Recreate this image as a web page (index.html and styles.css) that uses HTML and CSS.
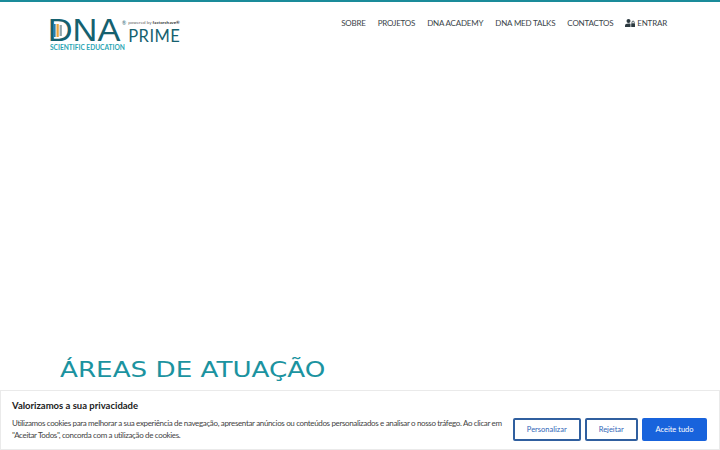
FILE: index.html
```html
<!DOCTYPE html>
<html lang="pt">
<head>
    <meta charset="UTF-8">
    <title>DNA Prime</title>
    <link rel="stylesheet" href="styles.css">
</head>
<body>
    <header class="site-header">
        <a class="logo" href="#">
            <div class="logo-top">
                <span class="logo-dna">DNA
                    <svg class="logo-bars" width="8" height="13" viewBox="0 0 8 13">
                        <rect x="0" y="0" width="2" height="13" fill="#2a7fa8"/>
                        <rect x="2.8" y="0" width="2" height="13" fill="#e8a33d"/>
                        <rect x="5.6" y="1" width="2" height="11" fill="#8fa6ad"/>
                    </svg>
                </span>
                <span class="logo-reg">®</span>
                <div class="logo-right">
                    <span class="logo-small">powered by <b>factorchave®</b></span>
                    <span class="logo-prime">PRIME</span>
                </div>
            </div>
            <span class="logo-sub">SCIENTIFIC EDUCATION</span>
        </a>
        <nav class="main-nav">
            <a href="#">SOBRE</a>
            <a href="#">PROJETOS</a>
            <a href="#">DNA ACADEMY</a>
            <a href="#">DNA MED TALKS</a>
            <a href="#">CONTACTOS</a>
            <a href="#" class="login">
                <svg width="10" height="8" viewBox="0 0 10 8"><circle cx="3.5" cy="2" r="2" fill="#2d3a40"/><path d="M0 8V6.6C0 5.2 1.2 4.5 3.5 4.5c.8 0 1.5.1 2 .3V8Z" fill="#2d3a40"/><rect x="6.2" y="4.2" width="3.8" height="3.8" rx=".5" fill="#2d3a40"/><path d="M7 4.2V3.2a1.1 1.1 0 0 1 2.2 0v1" fill="none" stroke="#2d3a40" stroke-width=".8"/></svg>
                ENTRAR
            </a>
        </nav>
    </header>

    <main class="content">
        <h2 class="section-title">ÁREAS DE ATUAÇÃO</h2>
    </main>

    <div class="cookie-bar">
        <div class="cookie-text">
            <p class="cookie-title">Valorizamos a sua privacidade</p>
            <p class="cookie-desc">Utilizamos cookies para melhorar a sua experiência de navegação, apresentar anúncios ou conteúdos personalizados e analisar o nosso tráfego. Ao clicar em "Aceitar Todos", concorda com a utilização de cookies.</p>
        </div>
        <div class="cookie-buttons">
            <button class="btn btn-outline btn-custom">Personalizar</button>
            <button class="btn btn-outline btn-reject">Rejeitar</button>
            <button class="btn btn-accept">Aceite tudo</button>
        </div>
    </div>
</body>
</html>
```

FILE: styles.css
```css
body {
    margin: 0;
    height: 450px;
    overflow: hidden;
    display: flex;
    flex-direction: column;
    background-color: #fff;
    font-family: "Lato", "Open Sans", sans-serif;
    color: #3a4449;
    border-top: 2px solid #1a8b9a;
    box-sizing: border-box;
}

a {
    color: inherit;
    text-decoration: none;
}

.site-header {
    display: flex;
    justify-content: space-between;
    align-items: flex-start;
    padding: 15px 53px 0 50px;
}

.logo {
    display: flex;
    flex-direction: column;
    padding-top: 3px;
}

.logo-top {
    display: flex;
    align-items: flex-start;
}

.logo-dna {
    position: relative;
    width: 72px;
    font-family: "Liberation Sans", sans-serif;
    font-size: 30.7px;
    line-height: 22px;
    color: #15616f;
    transform: scaleX(1.12) translateX(-2px);
    transform-origin: left;
}

.logo-bars {
    position: absolute;
    left: 5px;
    top: 4px;
}

.logo-reg {
    font-size: 5px;
    line-height: 6px;
    color: #15616f;
    margin-right: 2px;
}

.logo-right {
    display: flex;
    flex-direction: column;
    gap: 4px;
}

.logo-small {
    font-size: 4.5px;
    line-height: 6px;
    white-space: nowrap;
    color: #666;
}

.logo-small b {
    color: #333;
}

.logo-prime {
    font-size: 16.5px;
    line-height: 12px;
    letter-spacing: .5px;
    color: #15616f;
}

.logo-sub {
    margin-top: 2px;
    font-weight: 700;
    font-size: 6.6px;
    line-height: 7px;
    color: #2aa6b4;
}

.main-nav {
    display: flex;
    gap: 12px;
    font-size: 8px;
    line-height: 12px;
    letter-spacing: -.2px;
}

.main-nav a {
    white-space: nowrap;
    display: flex;
    align-items: center;
    gap: 2px;
}

.content {
    flex: 1;
    padding: 0 60px;
    display: flex;
    align-items: flex-end;
}

.section-title {
    margin: 0 0 67px;
    font-family: "DejaVu Sans", sans-serif;
    font-weight: 400;
    font-size: 22px;
    line-height: 26px;
    white-space: nowrap;
    color: #1b93a0;
    transform: scaleX(1.19);
    transform-origin: left;
}

.cookie-bar {
    position: absolute;
    left: 0;
    right: 0;
    bottom: 0;
    height: 60px;
    box-sizing: border-box;
    display: flex;
    align-items: flex-end;
    justify-content: space-between;
    padding: 0 12px 8px 11px;
    background-color: #fff;
    border: 1px solid #eaeaea;
}

.cookie-text {
    width: 492px;
}

.cookie-title {
    margin: 0 0 5px;
    font-weight: 700;
    font-size: 9.5px;
    line-height: 12px;
    color: #212121;
}

.cookie-desc {
    margin: 0;
    font-size: 8px;
    line-height: 12px;
    letter-spacing: -.35px;
    color: #444;
}

.cookie-buttons {
    display: flex;
    gap: 4px;
}

.btn {
    height: 23px;
    padding: 0;
    font-family: inherit;
    font-size: 7.5px;
    border-radius: 2px;
    border: 2px solid #1863dc;
}

.btn-outline {
    background-color: #fff;
    color: #2f66b8;
    border-color: #305f9f;
}

.btn-custom {
    width: 67.5px;
}

.btn-reject {
    width: 53.5px;
}

.btn-accept {
    width: 65px;
    background-color: #1863dc;
    color: #fff;
}
```
